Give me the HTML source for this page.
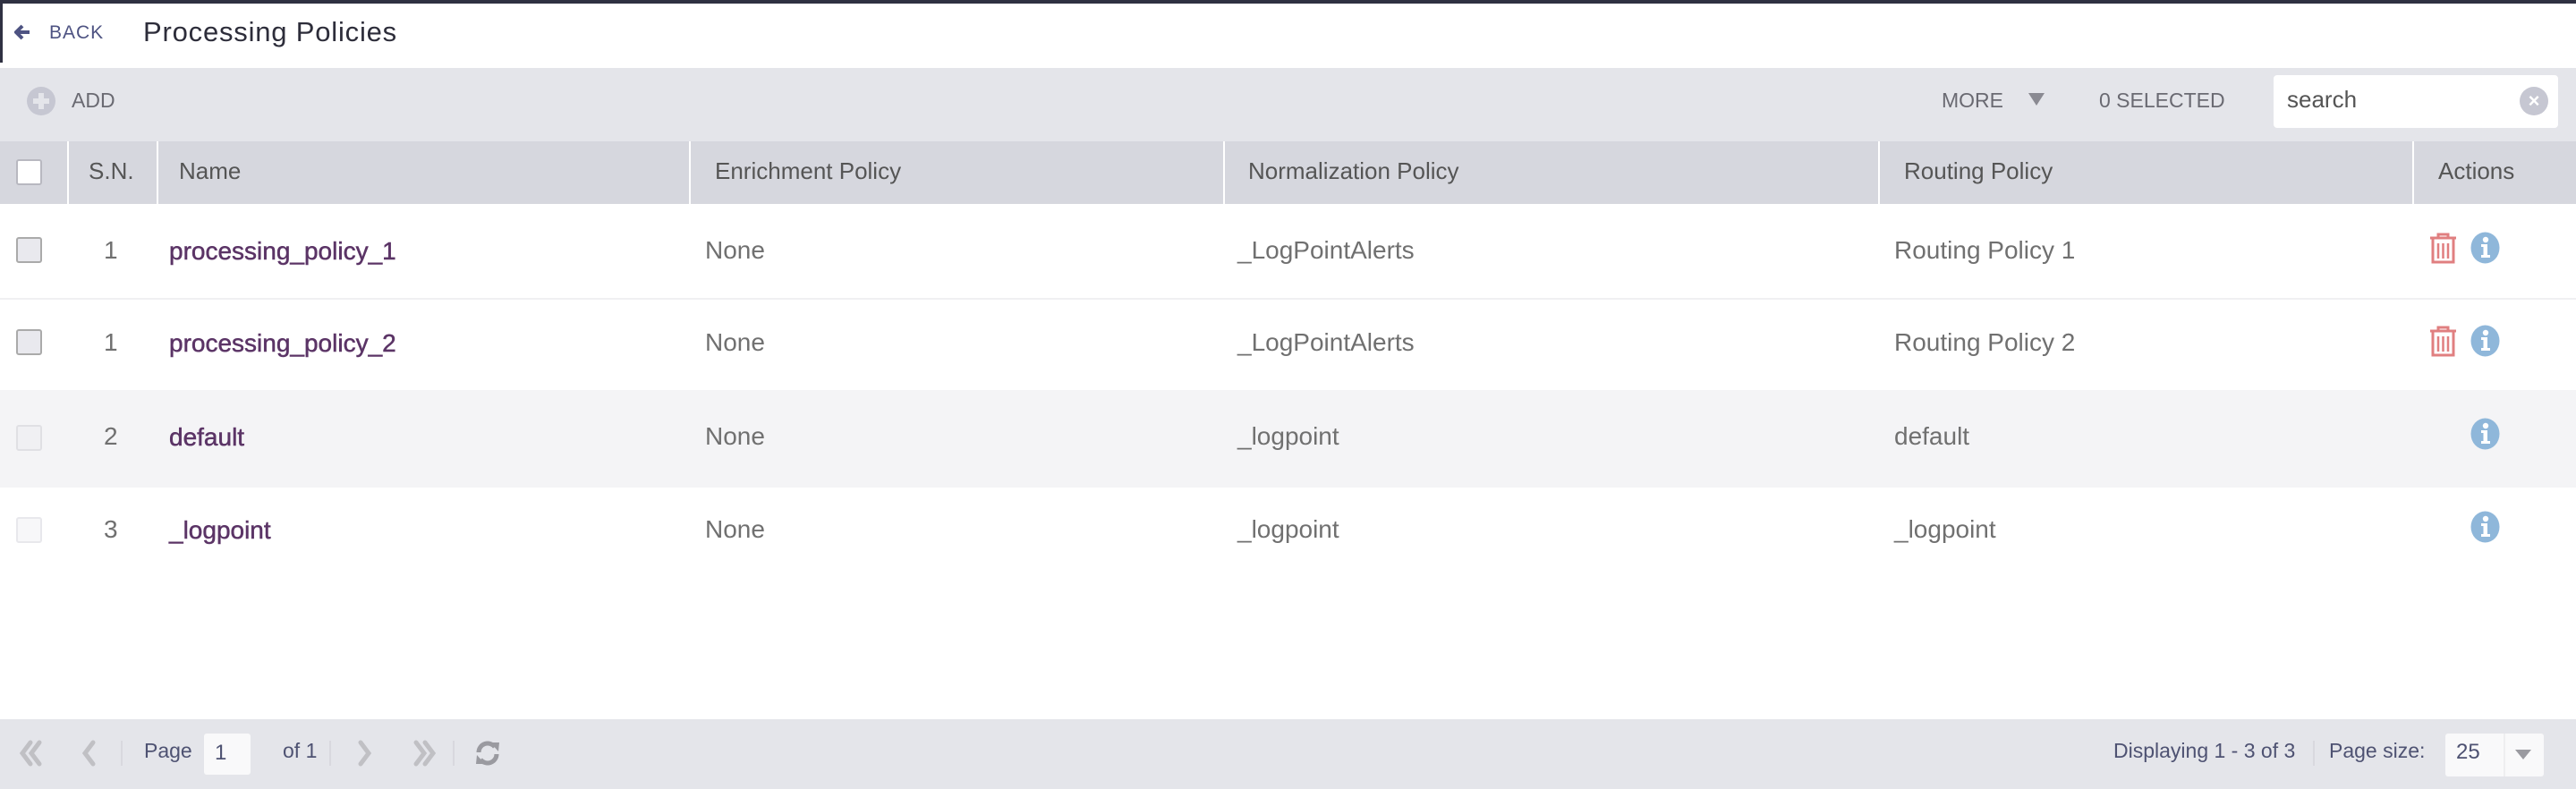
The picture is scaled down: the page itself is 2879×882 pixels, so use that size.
<!DOCTYPE html>
<html><head><meta charset="utf-8"><style>
*{box-sizing:border-box;margin:0;padding:0}
body{width:2879px;height:882px;overflow:hidden;background:#fff;font-family:"Liberation Sans",sans-serif;position:relative;color:#707070}
.a{position:absolute;white-space:nowrap}
.n{font-size:28px;color:#5b3466;-webkit-text-stroke:0.5px #5b3466}
</style></head><body>
<div class="a" style="left:0;top:0;width:2879px;height:4px;background:#2f3142"></div>
<div class="a" style="left:0;top:0;width:3px;height:70px;background:#2f3142"></div>
<svg class="a" style="left:16px;top:27px" width="18" height="18" viewBox="0 0 18 18"><path d="M9 2 L2 9 L9 16 M2 9 H17" stroke="#4e5382" stroke-width="4" fill="none"/></svg>
<div class="a" style="left:55px;top:25px;font-size:21px;color:#4e5382;letter-spacing:1px">BACK</div>
<div class="a" style="left:160px;top:18px;font-size:31px;color:#2d2d3a;letter-spacing:.8px">Processing Policies</div>

<div class="a" style="left:0;top:76px;width:2879px;height:82px;background:#e4e5ea"></div>
<div class="a" style="left:30px;top:97px;width:32px;height:32px;border-radius:50%;background:#c6c7d2"></div>
<div class="a" style="left:43px;top:104px;width:6px;height:18px;background:#e4e5ea"></div>
<div class="a" style="left:37px;top:110px;width:18px;height:6px;background:#e4e5ea"></div>
<div class="a" style="left:80px;top:99px;font-size:23px;color:#6a6a72">ADD</div>
<div class="a" style="left:2170px;top:99px;font-size:23px;color:#6a6a72">MORE</div>
<div class="a" style="left:2267px;top:104px;width:0;height:0;border-left:9px solid transparent;border-right:9px solid transparent;border-top:14px solid #8a8a92"></div>
<div class="a" style="left:2346px;top:99px;font-size:23px;color:#6a6a72">0 SELECTED</div>
<div class="a" style="left:2541px;top:84px;width:318px;height:59px;background:#fff;border-radius:4px"></div>
<div class="a" style="left:2556px;top:96px;font-size:26px;color:#555">search</div>
<div class="a" style="left:2816px;top:97px;width:32px;height:32px;border-radius:50%;background:#c6c7d2;color:#fff;font-size:22px;text-align:center;line-height:32px;font-weight:bold">×</div>

<div class="a" style="left:0;top:158px;width:2879px;height:70px;background:#d6d7de"></div>
<div class="a" style="left:75px;top:158px;width:2px;height:70px;background:#fff"></div>
<div class="a" style="left:175px;top:158px;width:2px;height:70px;background:#fff"></div>
<div class="a" style="left:770px;top:158px;width:2px;height:70px;background:#fff"></div>
<div class="a" style="left:1367px;top:158px;width:2px;height:70px;background:#fff"></div>
<div class="a" style="left:2099px;top:158px;width:2px;height:70px;background:#fff"></div>
<div class="a" style="left:2696px;top:158px;width:2px;height:70px;background:#fff"></div>
<div class="a" style="left:18px;top:178px;width:29px;height:29px;background:#fff;border:2px solid #b8b8c0;border-radius:3px"></div>
<div class="a" style="left:99px;top:176px;font-size:26px;color:#555">S.N.</div>
<div class="a" style="left:200px;top:176px;font-size:26px;color:#555">Name</div>
<div class="a" style="left:799px;top:176px;font-size:26px;color:#555">Enrichment Policy</div>
<div class="a" style="left:1395px;top:176px;font-size:26px;color:#555">Normalization Policy</div>
<div class="a" style="left:2128px;top:176px;font-size:26px;color:#555">Routing Policy</div>
<div class="a" style="left:2725px;top:176px;font-size:26px;color:#555">Actions</div>

<div class="a" style="left:0;top:333px;width:2879px;height:2px;background:#f0f0f2"></div>
<div class="a" style="left:0;top:436px;width:2879px;height:109px;background:#f4f4f6"></div>
<div class="a" style="left:0;top:545px;width:2879px;height:2px;background:#fff"></div>

<div class="a" style="left:18px;top:265px;width:29px;height:29px;background:#e9e9ee;border:2px solid #aaa;border-radius:3px"></div>
<div class="a" style="left:116px;top:264px;font-size:28px">1</div>
<div class="a n" style="left:189px;top:265px">processing_policy_1</div>
<div class="a" style="left:788px;top:264px;font-size:28px">None</div>
<div class="a" style="left:1383px;top:264px;font-size:28px">_LogPointAlerts</div>
<div class="a" style="left:2117px;top:264px;font-size:28px">Routing Policy 1</div>

<div class="a" style="left:18px;top:368px;width:29px;height:29px;background:#e9e9ee;border:2px solid #aaa;border-radius:3px"></div>
<div class="a" style="left:116px;top:367px;font-size:28px">1</div>
<div class="a n" style="left:189px;top:368px">processing_policy_2</div>
<div class="a" style="left:788px;top:367px;font-size:28px">None</div>
<div class="a" style="left:1383px;top:367px;font-size:28px">_LogPointAlerts</div>
<div class="a" style="left:2117px;top:367px;font-size:28px">Routing Policy 2</div>

<div class="a" style="left:18px;top:475px;width:29px;height:29px;background:#f0f0f3;border:2px solid #e0e0e4;border-radius:3px"></div>
<div class="a" style="left:116px;top:472px;font-size:28px">2</div>
<div class="a n" style="left:189px;top:473px">default</div>
<div class="a" style="left:788px;top:472px;font-size:28px">None</div>
<div class="a" style="left:1383px;top:472px;font-size:28px">_logpoint</div>
<div class="a" style="left:2117px;top:472px;font-size:28px">default</div>

<div class="a" style="left:18px;top:578px;width:29px;height:29px;background:#f7f7f9;border:2px solid #e8e8ec;border-radius:3px"></div>
<div class="a" style="left:116px;top:576px;font-size:28px">3</div>
<div class="a n" style="left:189px;top:577px">_logpoint</div>
<div class="a" style="left:788px;top:576px;font-size:28px">None</div>
<div class="a" style="left:1383px;top:576px;font-size:28px">_logpoint</div>
<div class="a" style="left:2117px;top:576px;font-size:28px">_logpoint</div>

<svg class="a" style="left:2714px;top:260px" width="33" height="36" viewBox="0 0 33 36"><g fill="none" stroke="#e07f80" stroke-width="3"><path d="M11 5 V2 H22 V5"/><path d="M2 6 H31"/><path d="M5 7 V33 H28 V7"/><path d="M11 12 V29 M16.5 12 V29 M22 12 V29" stroke-width="2.5"/></g></svg>
<svg class="a" style="left:2761px;top:259px" width="33" height="36" viewBox="0 0 33 36"><ellipse cx="16.5" cy="18" rx="16" ry="17.5" fill="#8fb7da"/><circle cx="17" cy="9" r="3.2" fill="#fff"/><path d="M12 14 H19 V26 H22 V29 H12 V26 H14.5 V17 H12Z" fill="#fff"/></svg>
<svg class="a" style="left:2714px;top:364px" width="33" height="36" viewBox="0 0 33 36"><g fill="none" stroke="#e07f80" stroke-width="3"><path d="M11 5 V2 H22 V5"/><path d="M2 6 H31"/><path d="M5 7 V33 H28 V7"/><path d="M11 12 V29 M16.5 12 V29 M22 12 V29" stroke-width="2.5"/></g></svg>
<svg class="a" style="left:2761px;top:363px" width="33" height="36" viewBox="0 0 33 36"><ellipse cx="16.5" cy="18" rx="16" ry="17.5" fill="#8fb7da"/><circle cx="17" cy="9" r="3.2" fill="#fff"/><path d="M12 14 H19 V26 H22 V29 H12 V26 H14.5 V17 H12Z" fill="#fff"/></svg>
<svg class="a" style="left:2761px;top:467px" width="33" height="36" viewBox="0 0 33 36"><ellipse cx="16.5" cy="18" rx="16" ry="17.5" fill="#8fb7da"/><circle cx="17" cy="9" r="3.2" fill="#fff"/><path d="M12 14 H19 V26 H22 V29 H12 V26 H14.5 V17 H12Z" fill="#fff"/></svg>
<svg class="a" style="left:2761px;top:571px" width="33" height="36" viewBox="0 0 33 36"><ellipse cx="16.5" cy="18" rx="16" ry="17.5" fill="#8fb7da"/><circle cx="17" cy="9" r="3.2" fill="#fff"/><path d="M12 14 H19 V26 H22 V29 H12 V26 H14.5 V17 H12Z" fill="#fff"/></svg>

<div class="a" style="left:0;top:804px;width:2879px;height:78px;background:#e4e5ea"></div>
<svg class="a" style="left:20px;top:827px" width="110" height="30" viewBox="0 0 110 30"><g fill="none" stroke="#c0c0c4" stroke-width="5" stroke-linecap="round"><path d="M14 3 L5 15 L14 27 M24 3 L15 15 L24 27"/><path d="M84 3 L75 15 L84 27"/></g></svg>
<div class="a" style="left:135px;top:828px;width:2px;height:28px;background:#d8d8de"></div>
<div class="a" style="left:161px;top:826px;font-size:23px;color:#4e5272">Page</div>
<div class="a" style="left:228px;top:820px;width:52px;height:46px;background:#f9f9fa;border-radius:3px;font-size:24px;color:#4e5272;padding:8px 0 0 12px">1</div>
<div class="a" style="left:316px;top:826px;font-size:23px;color:#4e5272">of 1</div>
<div class="a" style="left:368px;top:828px;width:2px;height:28px;background:#d8d8de"></div>
<svg class="a" style="left:395px;top:827px" width="100" height="30" viewBox="0 0 100 30"><g fill="none" stroke="#c0c0c4" stroke-width="5" stroke-linecap="round"><path d="M8 3 L17 15 L8 27"/><path d="M70 3 L79 15 L70 27 M80 3 L89 15 L80 27"/></g></svg>
<div class="a" style="left:506px;top:828px;width:2px;height:28px;background:#d8d8de"></div>
<svg class="a" style="left:530px;top:826px" width="30" height="32" viewBox="0 0 30 32"><g fill="none" stroke="#9a9aa0" stroke-width="5"><path d="M5 15 A10 10 0 0 1 23 9"/><path d="M25 17 A10 10 0 0 1 7 23"/></g><path d="M18 4 L28 4 L27 14Z M12 28 L2 28 L3 18Z" fill="#9a9aa0"/></svg>
<div class="a" style="left:2362px;top:826px;font-size:23px;color:#4e5272">Displaying 1 - 3 of 3</div>
<div class="a" style="left:2585px;top:828px;width:2px;height:28px;background:#d8d8de"></div>
<div class="a" style="left:2603px;top:826px;font-size:23px;color:#4e5272">Page size:</div>
<div class="a" style="left:2733px;top:820px;width:110px;height:48px;background:#f9f9fa;border-radius:3px"></div>
<div class="a" style="left:2798px;top:820px;width:2px;height:48px;background:#eeeef0"></div>
<div class="a" style="left:2745px;top:827px;font-size:24px;color:#4e5272">25</div>
<div class="a" style="left:2811px;top:838px;border-left:9px solid transparent;border-right:9px solid transparent;border-top:11px solid #9a9aa0"></div>
</body></html>
